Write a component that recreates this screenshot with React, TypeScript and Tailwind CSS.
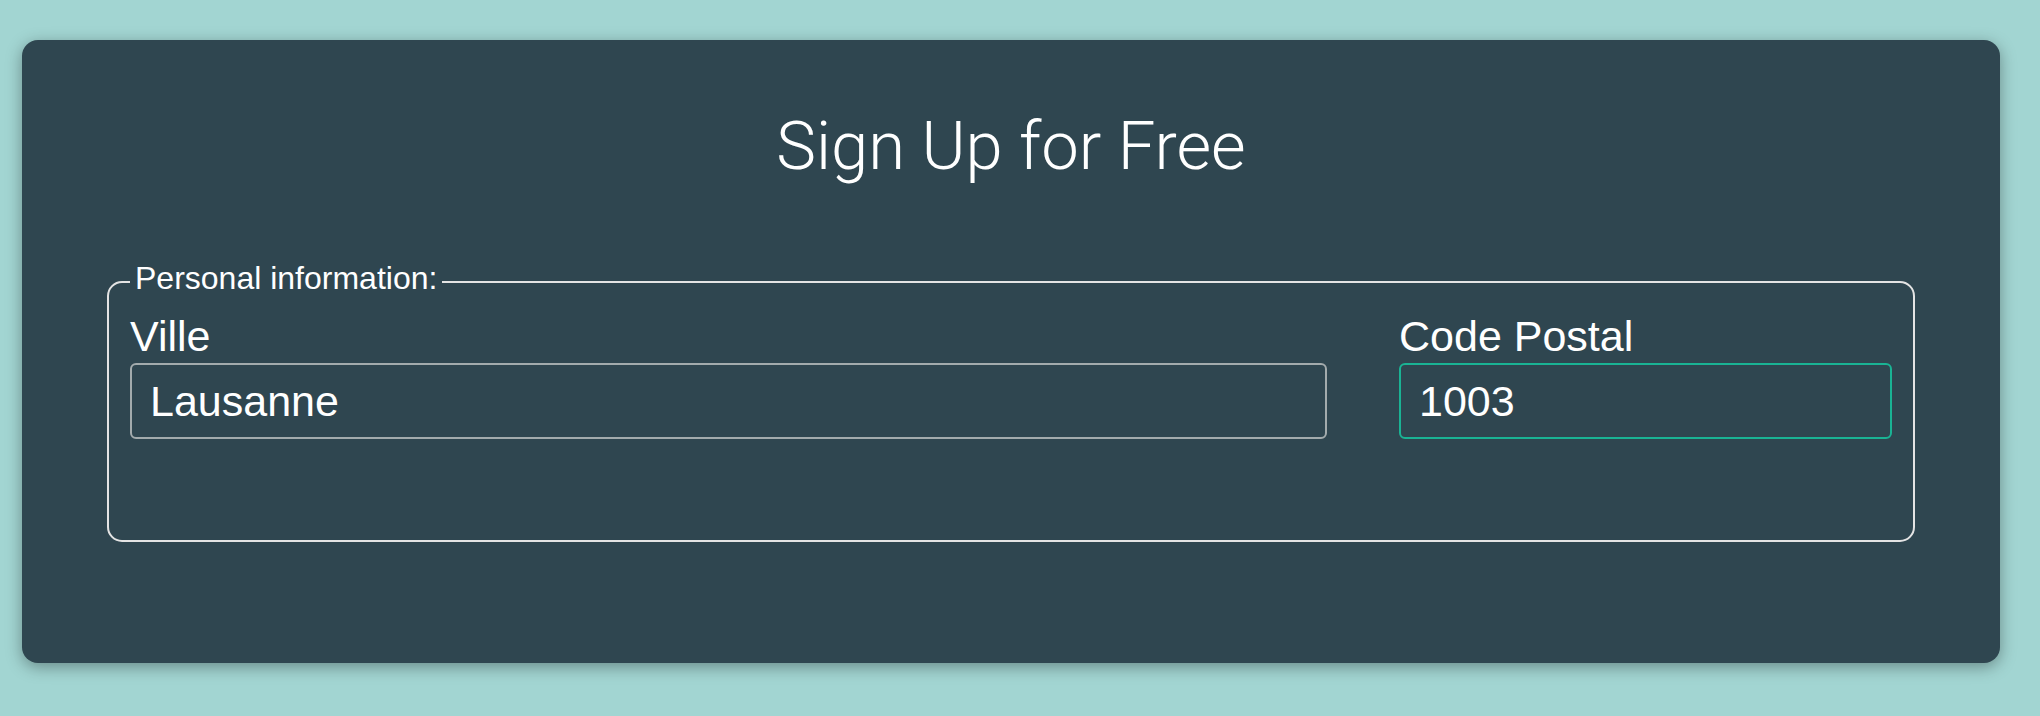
import { useState } from "react";

export default function App() {
  const [ville, setVille] = useState("Lausanne");
  const [code, setCode] = useState("1003");

  return (
    <div className="min-h-[716px] w-full bg-[#a2d5d2] pl-[22px] pt-[40px] font-['Liberation_Sans',Arial,sans-serif]">
      <div className="flex h-[623px] w-[1978px] flex-col rounded-[16px] bg-[#2f4650] px-[85px] pt-[73px] shadow-[0_4px_16px_rgba(0,0,0,0.35)]">
        <h1 className="text-center font-['Roboto',sans-serif] text-[67px] font-light leading-none text-white">
          Sign Up for Free
        </h1>

        {/* ── PERSONAL INFO ── */}
        <fieldset className="mt-[82px] rounded-[15px] border-2 border-[#e4e4e4] px-[21px] pb-[101px] pt-[13px]">
          <legend className="px-[5px] pb-[8px] text-[32px] leading-none text-white">
            Personal information:
          </legend>
          <div className="grid grid-cols-[1fr_493px] gap-x-[72px]">
            <div className="flex flex-col">
              <label className="mb-[5px] text-[43px] leading-none text-white">
                Ville
              </label>
              <input
                type="text"
                value={ville}
                onChange={(e) => setVille(e.target.value)}
                className="h-[76px] w-full rounded-md border-2 border-[#a3abad] bg-transparent px-[18px] text-[43px] text-white outline-none"
              />
            </div>
            <div className="flex flex-col">
              <label className="mb-[5px] text-[43px] leading-none text-white">
                Code Postal
              </label>
              <input
                type="text"
                value={code}
                onChange={(e) => setCode(e.target.value)}
                className="h-[76px] w-full rounded-md border-2 border-[#1ab394] bg-transparent px-[18px] text-[43px] text-white outline-none"
              />
            </div>
          </div>
        </fieldset>
      </div>
    </div>
  );
}
